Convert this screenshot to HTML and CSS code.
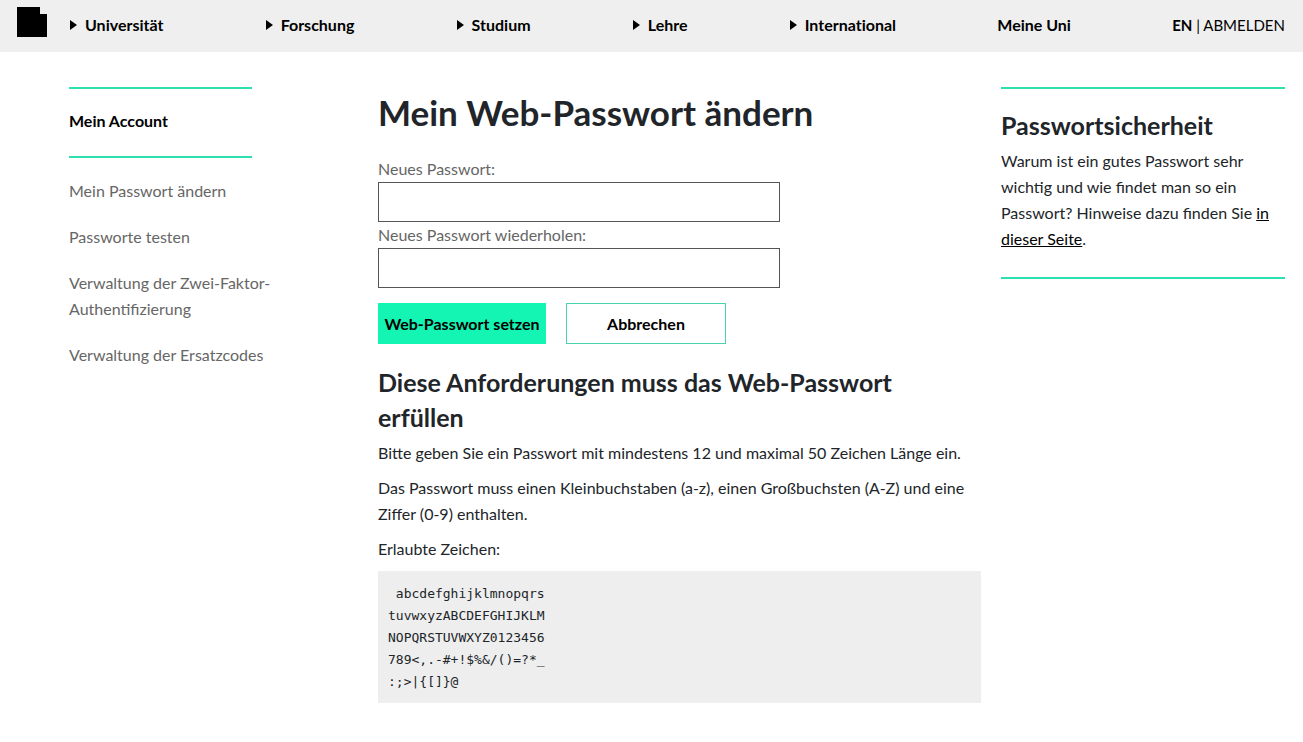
FILE: index.html
```html
<!DOCTYPE html>
<html lang="de">
<head>
  <meta charset="UTF-8">
  <meta name="viewport" content="width=device-width, initial-scale=1.0">
  <title>Mein Web-Passwort ändern</title>
  <link rel="stylesheet" href="styles.css">
</head>
<body>
  <header class="header">
    <a class="logo" href="#" aria-label="Startseite">
      <svg width="30" height="30" viewBox="0 0 30 30"><path d="M0 0h23v7h7v23H0z"/></svg>
    </a>
    <nav class="main-nav">
      <a class="has-sub" href="#">Universität</a>
      <a class="has-sub" href="#">Forschung</a>
      <a class="has-sub" href="#">Studium</a>
      <a class="has-sub" href="#">Lehre</a>
      <a class="has-sub" href="#">International</a>
      <a href="#">Meine Uni</a>
      <div class="meta"><a href="#">EN</a> | <a class="logout" href="#">ABMELDEN</a></div>
    </nav>
  </header>

  <div class="page">
    <nav class="side-nav">
      <a class="current" href="#">Mein Account</a>
      <ul>
        <li><a href="#">Mein Passwort ändern</a></li>
        <li><a href="#">Passworte testen</a></li>
        <li><a href="#">Verwaltung der Zwei-Faktor-Authentifizierung</a></li>
        <li><a href="#">Verwaltung der Ersatzcodes</a></li>
      </ul>
    </nav>

    <main>
      <h1>Mein Web-Passwort ändern</h1>
      <form>
        <label for="password">Neues Passwort:</label>
        <input type="password" id="password">
        <label for="password-repeat">Neues Passwort wiederholen:</label>
        <input type="password" id="password-repeat">
        <div class="buttons">
          <button type="submit" class="primary">Web-Passwort setzen</button>
          <button type="button" class="secondary">Abbrechen</button>
        </div>
      </form>

      <h2>Diese Anforderungen muss das Web-Passwort erfüllen</h2>
      <p>Bitte geben Sie ein Passwort mit mindestens 12 und maximal 50 Zeichen Länge ein.</p>
      <p>Das Passwort muss einen Kleinbuchstaben (a-z), einen Großbuchsten (A-Z) und eine Ziffer (0-9) enthalten.</p>
      <p>Erlaubte Zeichen:</p>
<pre> abcdefghijklmnopqrs
tuvwxyzABCDEFGHIJKLM
NOPQRSTUVWXYZ0123456
789&lt;,.-#+!$%&amp;/()=?*_
:;&gt;|{[]}@</pre>
    </main>

    <aside class="info">
      <h2>Passwortsicherheit</h2>
      <p>Warum ist ein gutes Passwort sehr wichtig und wie findet man so ein Passwort? Hinweise dazu finden Sie <a href="#">in dieser Seite</a>.</p>
    </aside>
  </div>
</body>
</html>
```
FILE: styles.css
```css
* {
  box-sizing: border-box;
}
body {
  margin: 0;
  font-family: Lato, "Open Sans", sans-serif;
  font-size: 16px;
  line-height: 26px;
  color: #212529;
  background: #fff;
}
a {
  color: #000;
}

/* Header */
.header {
  display: flex;
  align-items: center;
  height: 52px;
  padding: 0 18px 0 17px;
  background: #efefef;
}
.logo {
  flex: none;
  width: 52px;
  height: 38px;
}
.logo svg {
  display: block;
}
.main-nav {
  flex: 1;
  display: flex;
  justify-content: space-between;
  padding-bottom: 2px;
  color: #000;
  font-variant-ligatures: none;
}
.main-nav a {
  font-weight: bold;
  text-decoration: none;
}
.main-nav .has-sub {
  display: flex;
  align-items: center;
}
.has-sub::before {
  content: "";
  margin: 0 8px 0 1px;
  border-left: 7px solid #000;
  border-top: 5px solid transparent;
  border-bottom: 5px solid transparent;
}
.meta {
  font-size: 15px;
}
.main-nav .logout {
  font-weight: normal;
}

/* Layout */
.page {
  display: grid;
  grid-template-columns: 289fr 603fr 284fr;
  gap: 20px;
  align-items: start;
  padding: 35px 18px 35px 69px;
}

/* Left column */
.side-nav {
  max-width: 220px;
}
.side-nav .current {
  display: block;
  width: 183px;
  padding: 19px 0 22px;
  border-top: 2px solid #2de0b0;
  border-bottom: 2px solid #2de0b0;
  font-weight: bold;
}
.side-nav a {
  color: #666;
  text-decoration: none;
}
.side-nav .current {
  color: #000;
}
.side-nav ul {
  margin: 20px 0 0;
  padding: 0;
  list-style: none;
}
.side-nav li {
  margin-bottom: 20px;
}

/* Content */
h1 {
  margin: 0 0 19px;
  font-size: 35px;
  line-height: 50px;
}
h2 {
  margin: 0 0 5px;
  font-size: 25px;
  line-height: 35px;
}
p {
  margin: 0 0 9px;
}
label {
  display: block;
  color: #666;
}
input {
  display: block;
  width: 402px;
  max-width: 100%;
  height: 40px;
  padding: 0 10px;
  border: 1px solid #555;
  font: inherit;
}
.buttons {
  display: flex;
  gap: 20px;
  margin: 15px 0 21px;
}
button {
  height: 41px;
  padding: 0;
  border: 1px solid #14f5b4;
  font: inherit;
  font-weight: bold;
  color: #000;
  cursor: pointer;
}
.primary {
  width: 168px;
  background: #14f5b4;
}
.secondary {
  width: 160px;
  border-color: #4ad3b0;
  background: #fff;
}
pre {
  margin: 0;
  padding: 12px 10px 10px;
  background: #eee;
  font-family: "DejaVu Sans Mono", monospace;
  font-size: 13px;
  line-height: 22px;
}

/* Right column */
.info {
  padding: 19px 0 16px;
  border-top: 2px solid #2de0b0;
  border-bottom: 2px solid #2de0b0;
}
```
